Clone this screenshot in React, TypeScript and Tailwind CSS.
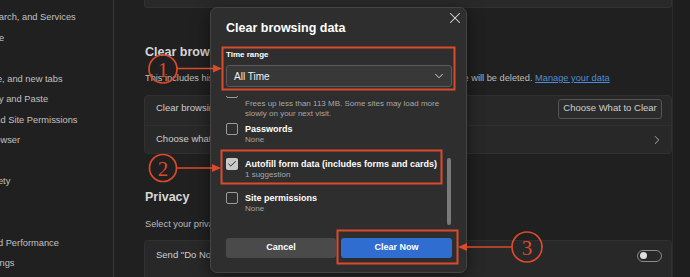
import { X, ChevronDown, ChevronRight, Check } from "lucide-react";

const sidebar = [
  "Privacy, search, and Services",
  "Appearance",
  "Sidebar",
  "Start, home, and new tabs",
  "Share, copy and Paste",
  "Cookies and Site Permissions",
  "Default Browser",
  "Downloads",
  "Family Safety",
  "Languages",
  "Printers",
  "System and Performance",
  "Reset Settings",
];

function Box({ checked }: { checked?: boolean }) {
  if (checked)
    return (
      <div className="flex h-[12px] w-[12px] shrink-0 items-center justify-center rounded-[2px] bg-[#c9c9c9]">
        <Check size={10} strokeWidth={2.4} color="#2c2c2c" />
      </div>
    );
  return <div className="h-[12px] w-[12px] shrink-0 rounded-[2px] border border-[#9c9c9c]" />;
}

function Item({
  title,
  desc,
  checked,
  className,
}: {
  title: string;
  desc: string[];
  checked?: boolean;
  className?: string;
}) {
  return (
    <div className={"flex gap-[7px] " + (className ?? "")}>
      <Box checked={checked} />
      <div className="flex flex-col">
        <div className="whitespace-nowrap text-[9px] font-bold leading-[12px] text-white">{title}</div>
        {desc.map((d) => (
          <div key={d} className="whitespace-nowrap text-[8px] leading-[10px] text-[#a6a6a6]">
            {d}
          </div>
        ))}
      </div>
    </div>
  );
}

export default function App() {
  return (
    <div className="relative h-[277px] w-[690px] overflow-hidden bg-[#202020] font-['Liberation_Sans',Arial,sans-serif]">
      <div className="flex h-full">
        <aside className="w-[114px] shrink-0 overflow-hidden border-r border-[#383838] pt-[7px]">
          {sidebar.map((s) => (
            <div
              key={s}
              className="ml-[-46px] h-[20.5px] whitespace-nowrap text-[9.3px] leading-[20.5px] text-[#c0c0c0]"
            >
              {s}
            </div>
          ))}
        </aside>
        <main className="flex flex-1">
          <div className="ml-[30px] w-[528px] shrink-0">
            <div className="h-[8px] rounded-b-[4px] border border-t-0 border-[#313131] bg-[#292929]" />
            <div className="mt-[36px] pl-[1px] text-[12.5px] font-bold leading-[16px] text-[#d6d6d6]">
              Clear browsing data
            </div>
            <div className="mt-[12px] whitespace-nowrap pl-[1px] text-[9.25px] leading-[12px] text-[#bcbcbc]">
              This includes history, passwords, cookies, and more. Only data from this profile will be deleted.{" "}
              <span className="text-[#4d8fd6] underline">Manage your data</span>
            </div>
            <div className="mt-[11px] rounded-[4px] border border-[#303030] bg-[#282828]">
              <div className="flex h-[29px] items-center justify-between pb-[4px] pl-[11px] pr-[9px]">
                <span className="text-[9.5px] text-[#cfcfcf]">Clear browsing data now</span>
                <div className="flex h-[20px] w-[104px] items-center justify-center rounded-[3px] border border-[#565656] bg-[#2b2b2b] text-[9.5px] text-[#d0d0d0]">
                  Choose What to Clear
                </div>
              </div>
              <div className="flex h-[28px] items-center justify-between border-t border-[#303030] pl-[11px] pr-[7px]">
                <span className="text-[9.5px] text-[#cfcfcf]">
                  Choose what to clear every time you close the browser
                </span>
                <ChevronRight size={14} strokeWidth={1.5} color="#bdbdbd" />
              </div>
            </div>
            <div className="mt-[35px] pl-[1px] text-[12.5px] font-bold leading-[16px] text-[#d6d6d6]">Privacy</div>
            <div className="mt-[12.5px] whitespace-nowrap pl-[1px] text-[9.25px] leading-[12px] text-[#bcbcbc]">
              Select your privacy settings for Microsoft Edge.
            </div>
            <div className="mt-[10.5px] h-[60px] rounded-[4px] border border-[#303030] bg-[#282828]">
              <div className="flex h-[29px] items-center justify-between pl-[11px] pr-[9px]">
                <span className="text-[9.5px] text-[#cfcfcf]">Send "Do Not Track" requests</span>
                <div className="flex h-[12px] w-[25px] items-center rounded-full border border-[#8a8a8a] pl-[2px]">
                  <div className="h-[7px] w-[7px] rounded-full bg-[#dedede]" />
                </div>
              </div>
            </div>
          </div>
          <div className="ml-auto w-[18px] border-l border-[#2c2c2c] bg-[#1e1e1e]" />
        </main>
      </div>

      {/* Dialog */}
      <div className="absolute left-[210px] top-[7px] flex h-[266px] w-[257px] flex-col rounded-[7px] border border-[#444444] bg-[#2e2e2e] pl-[15px] pr-[14px] pt-[12px] shadow-[0_4px_16px_rgba(0,0,0,0.5)]">
        <div className="absolute right-[2.5px] top-[0.5px]">
          <X size={18} strokeWidth={1.4} color="#dcdcdc" />
        </div>
        <div className="whitespace-nowrap text-[12.5px] font-bold leading-[16px] text-white">Clear browsing data</div>
        <div className="mt-[13.5px] text-[8px] font-bold leading-[10px] text-white">Time range</div>
        <div className="mt-[5.5px] flex h-[22px] items-center justify-between rounded-[3px] border border-[#5a5a5a] bg-[#383838] pl-[7px] pr-[5px]">
          <span className="text-[10px] text-[#f0f0f0]">All Time</span>
          <ChevronDown size={14} strokeWidth={1.6} color="#dcdcdc" />
        </div>
        <div className="mt-[9px] h-[130px] shrink-0 overflow-hidden">
          <div className="mt-[-10px]">
            <div className="flex gap-[7px]">
              <Box />
              <div className="flex flex-col">
                <div className="mt-[-3px] whitespace-nowrap text-[9px] font-bold leading-[12px] text-white">
                  Cached images and files
                </div>
                <div className="mt-[4px] whitespace-nowrap text-[8px] leading-[10px] text-[#a6a6a6]">
                  Frees up less than 113 MB. Some sites may load more
                </div>
                <div className="whitespace-nowrap text-[8px] leading-[10px] text-[#a6a6a6]">
                  slowly on your next visit.
                </div>
              </div>
            </div>
            <Item className="mt-[4px]" title="Passwords" desc={["None"]} />
            <Item
              className="mt-[12.5px]"
              title="Autofill form data (includes forms and cards)"
              desc={["1 suggestion"]}
              checked
            />
            <Item className="mt-[12.5px]" title="Site permissions" desc={["None"]} />
            <Item className="mt-[12.5px]" title="Hosted app data" desc={["1 app"]} />
          </div>
        </div>
        <div className="absolute left-[236px] top-[150px] h-[67px] w-[4px] rounded-full bg-[#7a7a7a]" />
        <div className="mt-[12px] flex gap-[5px]">
          <div className="flex h-[20px] w-[110px] items-center justify-center rounded-[3px] bg-[#4a4a4a] text-[9px] font-bold text-white">
            Cancel
          </div>
          <div className="flex h-[20px] flex-1 items-center justify-center rounded-[3px] bg-[#2f6dd0] text-[9px] font-bold text-white">
            Clear Now
          </div>
        </div>
      </div>

      {/* Annotations */}
      <svg
        className="pointer-events-none absolute left-0 top-0"
        width="690"
        height="277"
        viewBox="0 0 690 277"
      >
        <g fill="none" stroke="#dc4a2c" strokeWidth="2">
          <rect x="222.5" y="47.5" width="232" height="42" />
          <rect x="221.5" y="150.5" width="220" height="33" />
          <rect x="337.5" y="230.5" width="120" height="33" />
        </g>
        <g fill="none" stroke="#dc4a2c" strokeWidth="1.7">
          <circle cx="163" cy="69" r="14" />
          <circle cx="163" cy="168" r="13.5" />
          <circle cx="527" cy="247" r="15" />
          <line x1="177" y1="68.5" x2="214" y2="68.5" />
          <line x1="176.5" y1="168" x2="213" y2="168" />
          <line x1="512" y1="247" x2="466" y2="247" />
        </g>
        <g fill="#dc4a2c">
          <polygon points="222,68.5 213,64.5 213,72.5" />
          <polygon points="221,168 212,164 212,172" />
          <polygon points="458,247 467,243 467,251" />
        </g>
        <g fill="#dc4a2c" fontFamily="'Liberation Serif', 'DejaVu Serif', serif" fontSize="21" textAnchor="middle">
          <text x="163" y="76.5">1</text>
          <text x="163" y="175.5">2</text>
          <text x="527" y="254.5">3</text>
        </g>
      </svg>
    </div>
  );
}
